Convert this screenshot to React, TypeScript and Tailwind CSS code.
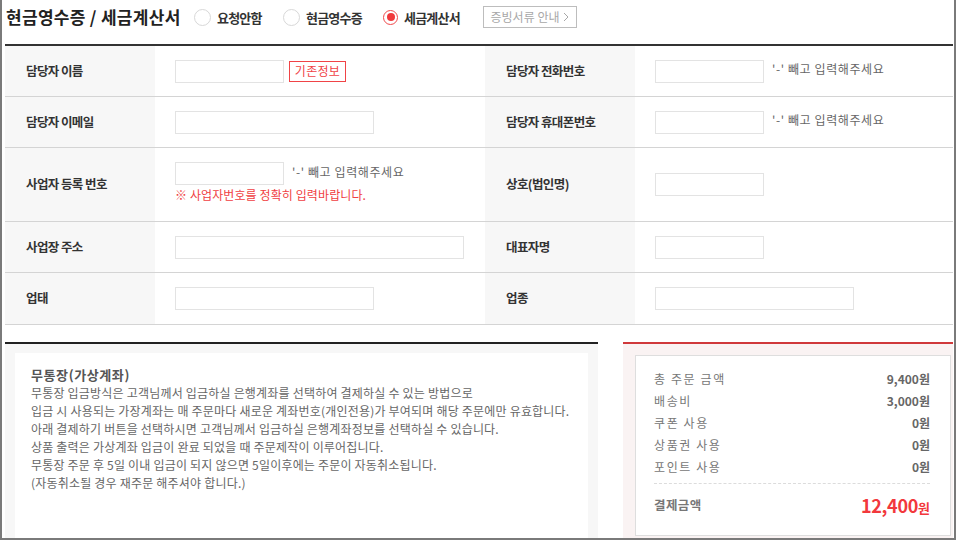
import type { ReactNode } from 'react';

const FONT = "font-['Noto_Sans_CJK_KR','Noto_Sans',sans-serif]";

function Radio({ label, checked = false }: { label: string; checked?: boolean }) {
    return (
        <div className="flex items-center gap-[6px]">
            {checked ? (
                <span className="w-[15px] h-[15px] rounded-full border-[1.5px] border-[#f0484a] bg-white flex items-center justify-center">
                    <span className="w-[8px] h-[8px] rounded-full bg-[#f0393b]" />
                </span>
            ) : (
                <span className="w-[17px] h-[17px] rounded-full border border-[#d8d8d8] bg-white" />
            )}
            <span className="text-[13px] font-bold text-[#333] tracking-[-0.8px] leading-none">{label}</span>
        </div>
    );
}

function Field({ w }: { w: string }) {
    return <input type="text" className={`${w} h-[23px] border border-[#e3e3e3] bg-white outline-none`} />;
}

function Hint() {
    return <span className="ml-[8px] -mt-[4px] text-[12px] text-[#666] tracking-[0.6px]">'-' 빼고 입력해주세요</span>;
}

function Label({ children }: { children: ReactNode }) {
    return (
        <div className="bg-[#f7f7f7] flex items-center pl-[21px] text-[12.5px] font-bold text-[#333] tracking-[-0.6px]">
            {children}
        </div>
    );
}

function Row({ h, children }: { h: string; children: ReactNode }) {
    return <div className={`grid grid-cols-[150px_330px_150px_1fr] ${h} border-b border-[#d4d4d4]`}>{children}</div>;
}

function Value({ children, top = false }: { children: ReactNode; top?: boolean }) {
    return (
        <div className={`pl-[20px] flex ${top ? 'flex-col items-start pt-[14px]' : 'items-center'}`}>
            {children}
        </div>
    );
}

const summary = [
    ['총 주문 금액', '9,400원'],
    ['배송비', '3,000원'],
    ['쿠폰 사용', '0원'],
    ['상품권 사용', '0원'],
    ['포인트 사용', '0원'],
];

const guide = [
    '무통장 입금방식은 고객님께서 입금하실 은행계좌를 선택하여 결제하실 수 있는 방법으로',
    '입금 시 사용되는 가장계좌는 매 주문마다 새로운 계좌번호(개인전용)가 부여되며 해당 주문에만 유효합니다.',
    '아래 결제하기 버튼을 선택하시면 고객님께서 입금하실 은행계좌정보를 선택하실 수 있습니다.',
    '상품 출력은 가상계좌 입금이 완료 되었을 때 주문제작이 이루어집니다.',
    '무통장 주문 후 5일 이내 입금이 되지 않으면 5일이후에는 주문이 자동취소됩니다.',
    '(자동취소될 경우 재주문 해주셔야 합니다.)',
];

export default function App() {
    return (
        <div className={`${FONT} w-[956px] h-[540px] overflow-hidden bg-white border-l-2 border-r-2 border-b-2 border-[#7a7a7a] pl-[3px] pr-[1px] flex flex-col`}>
            {/* header */}
            <div className="h-[34px] flex items-center shrink-0">
                <div className="w-[189px] pl-[1px] text-[17px] font-bold text-[#222] tracking-[0.3px] whitespace-nowrap">
                    현금영수증 / 세금계산서
                </div>
                <div className="w-[89px]"><Radio label="요청안함" /></div>
                <div className="w-[100px]"><Radio label="현금영수증" /></div>
                <div className="w-[100px]"><Radio label="세금계산서" checked /></div>
                <div className="w-[94px] h-[22px] border border-[#bdbdbd] flex items-center justify-center gap-[4px] text-[12px] text-[#a8a8a8] tracking-[0px]">
                    <span>증빙서류 안내</span>
                    <svg width="6" height="10" viewBox="0 0 6 10" fill="none">
                        <path d="M1 1l4 4-4 4" stroke="#a8a8a8" strokeWidth="1" />
                    </svg>
                </div>
            </div>

            {/* form table */}
            <div className="mt-[10px] border-t-2 border-[#333] shrink-0">
                <Row h="h-[51px]">
                    <Label>담당자 이름</Label>
                    <Value>
                        <Field w="w-[109px]" />
                        <button className="ml-[5px] w-[57px] h-[21px] border border-[#f04346] text-[12px] text-[#f04346] tracking-[0.3px] leading-none">
                            기존정보
                        </button>
                    </Value>
                    <Label>담당자 전화번호</Label>
                    <Value>
                        <Field w="w-[109px]" />
                        <Hint />
                    </Value>
                </Row>
                <Row h="h-[51px]">
                    <Label>담당자 이메일</Label>
                    <Value>
                        <Field w="w-[199px]" />
                    </Value>
                    <Label>담당자 휴대폰번호</Label>
                    <Value>
                        <Field w="w-[109px]" />
                        <Hint />
                    </Value>
                </Row>
                <Row h="h-[74px]">
                    <Label>사업자 등록 번호</Label>
                    <Value top>
                        <div className="flex items-center">
                            <Field w="w-[109px]" />
                            <Hint />
                        </div>
                        <span className="mt-[2px] text-[12px] leading-[16px] text-[#f03e42] tracking-[0.1px]">
                            ※ 사업자번호를 정확히 입력바랍니다.
                        </span>
                    </Value>
                    <Label>상호(법인명)</Label>
                    <Value>
                        <Field w="w-[109px]" />
                    </Value>
                </Row>
                <Row h="h-[51px]">
                    <Label>사업장 주소</Label>
                    <Value>
                        <Field w="w-[289px]" />
                    </Value>
                    <Label>대표자명</Label>
                    <Value>
                        <Field w="w-[109px]" />
                    </Value>
                </Row>
                <Row h="h-[52px]">
                    <Label>업태</Label>
                    <Value>
                        <Field w="w-[199px]" />
                    </Value>
                    <Label>업종</Label>
                    <Value>
                        <Field w="w-[199px]" />
                    </Value>
                </Row>
            </div>

            {/* bottom panels */}
            <div className="mt-[17px] flex flex-1 gap-[25px] min-h-0">
                <div className="w-[593px] border-t-2 border-[#222] bg-[#f7f7f7] pt-[9px] px-[10px] flex">
                    <div className="flex-1 bg-white pt-[13px] pl-[16px] text-[#666]">
                        <div className="text-[13px] font-bold text-[#555] leading-[18px] tracking-[0.6px]">무통장(가상계좌)</div>
                        {guide.map((line) => (
                            <div key={line} className="text-[12px] leading-[18px] tracking-[0.2px] whitespace-nowrap">
                                {line}
                            </div>
                        ))}
                    </div>
                </div>
                <div className="flex-1 border-t-2 border-[#d0393b] bg-[#faf3f3] pt-[11px] pl-[12px] pr-[2px] pb-[2px] flex">
                    <div className="flex-1 bg-white border border-[#dedede] pt-[12px] pl-[18px] pr-[20px]">
                        {summary.map(([k, v]) => (
                            <div key={k} className="flex justify-between items-center h-[22px]">
                                <span className="text-[12px] text-[#777] tracking-[1.6px]">{k}</span>
                                <span className="text-[12px] font-bold text-[#666]">{v}</span>
                            </div>
                        ))}
                        <div className="mt-[5px] border-t border-dashed border-[#dcdcdc] pt-[8px] flex justify-between items-center">
                            <span className="text-[12.5px] font-bold text-[#777] tracking-[0.4px]">결제금액</span>
                            <span className="text-[#f2383c] font-bold">
                                <span className="text-[18px] tracking-[-0.3px]">12,400</span>
                                <span className="text-[13px]">원</span>
                            </span>
                        </div>
                    </div>
                </div>
            </div>
        </div>
    );
}
